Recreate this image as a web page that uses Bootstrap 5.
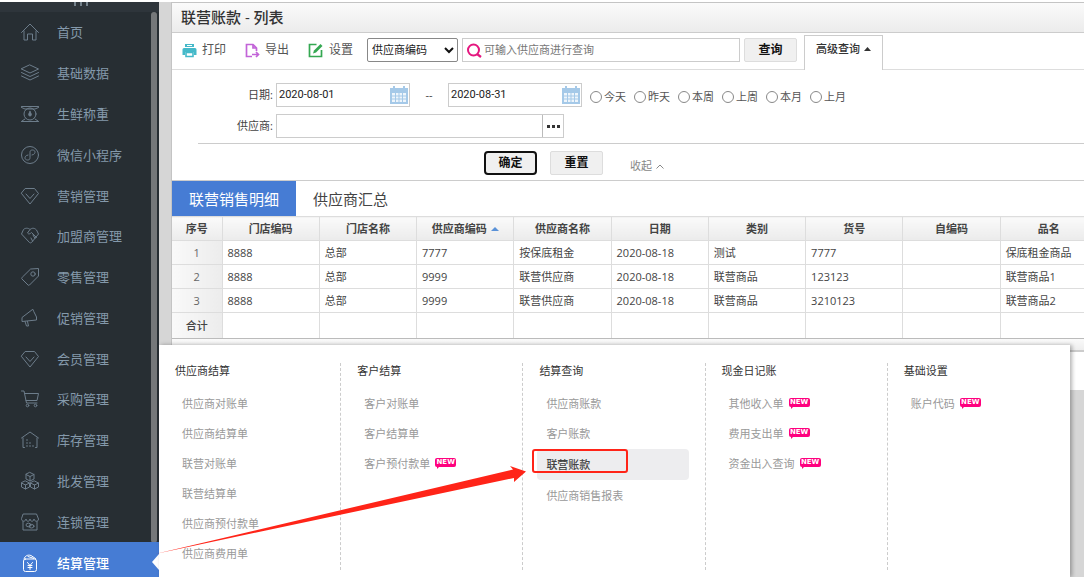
<!DOCTYPE html>
<html lang="zh-CN">
<head>
<meta charset="utf-8">
<meta name="viewport" content="width=device-width, initial-scale=1">
<title>联营账款 - 列表</title>
<link href="https://cdn.jsdelivr.net/npm/bootstrap@5.3.0/dist/css/bootstrap.min.css" rel="stylesheet">
<style>
  body{font-family:"Open Sans","Noto Sans CJK SC",sans-serif;font-size:11px;line-height:16px;color:#444;height:100vh;overflow:hidden;padding-top:2px;background:#fff}
  svg{display:block;flex:none}
  .line-ico{fill:none;stroke:currentColor;stroke-width:1;stroke-linejoin:round;stroke-linecap:round}
  a{text-decoration:none}
  /* sidebar */
  .side{width:159px;background:#272e33;overflow:hidden}
  .side-top{height:10px;background:#2e353b;overflow:hidden;padding-left:74px;gap:4px}
  .side-top i{width:2px;height:4px;background:#75828c}
  .side-list{height:calc(100vh - 6px)}
  .side-list::after{content:"";position:absolute;right:2px;top:0;width:6px;height:93%;border-radius:3px;background:#75787a}
  .side-item{flex:1 1 0;padding-left:20px;gap:17px;font-size:13px;color:#8499ab}
  .side-item svg{width:20px;height:20px;color:#6d7d8b}
  .side-item.active{background:#467cd4;color:#fff;font-weight:500;z-index:1}
  .side-item.active svg{color:#fff}
  .side-item.active::after{content:"";position:absolute;right:0;top:12px;border:8px solid transparent;border-left:0;border-right:7px solid #fff}
  /* main panel */
  .desk{background:#d6d6d6;padding-left:12px;min-width:0}
  .panel{background:#fff;border:1px solid #c4c4c4;border-right:0;border-bottom:0}
  .panel-title{height:30px;padding-left:9px;font-size:15px;line-height:28px;font-weight:500;color:#333;background:linear-gradient(#fafafa,#ececec);border-bottom:1px solid #ccc;margin:0}
  .tools{height:37px;padding:0 0 2px 10px;border-bottom:1px solid #ddd}
  .tool-btn{border:0;background:none;padding:0;font-size:12px;color:#555;gap:5px;margin-right:19px}
  .tool-btn.last{margin-right:14px}
  .box{border:1px solid #ccc;background:#fff;height:24px;color:#222}
  .box input,.query-sel{font-size:11px;color:#222;outline:0}
  .box input{border:0;min-width:0;padding:0 0 0 2px;background:none}
  .box input.day{font-family:Roboto,sans-serif}
  .box input::placeholder{color:#777}
  .query-sel{width:91px;height:24px;border:1px solid #888;border-radius:2px;background:#fff;padding:0 4px;appearance:none}
  .sel-wrap svg{position:absolute;right:4px;top:9px;pointer-events:none}
  .w-search{width:278px}
  .w-date{width:134px}
  .w-dash{width:38px}
  .w-sup{width:288px}
  .btn-gray{height:24px;width:53px;padding:0;border:1px solid #ddd;border-radius:2px;background:#f0f0f0;color:#111;font-size:12px;font-weight:700;line-height:20px}
  .btn-ok{border:2px solid #111;border-radius:4px}
  .adv{align-self:flex-end;width:79px;height:35px;margin:0 0 -3px 7px;padding:0 0 8px;border:1px solid #ccc;border-bottom:0;background:#fff;font-size:11px;font-weight:500;color:#333}
  .filter{padding:13px 0 5px}
  .flabel{width:101px;text-align:right;margin-right:3px}
  .sup-row{margin-top:7px}
  .radio-lbl{gap:2px;margin-right:8px;color:#555}
  .radio-lbl input{appearance:none;width:12px;height:12px;border:1px solid #888;border-radius:50%;margin:0}
  .rule{margin:5px 0 7px 26px;border-top:1px solid #ccc}
  .btn-row{padding-left:312px;gap:13px}
  .more{border:0;border-left:1px solid #bbb;background:#fff;width:21px;height:22px;padding:0}
  .fold{border:0;background:none;padding:0;color:#888;margin:6px 0 0 14px}
  .tabs{border-top:1px solid #ccc;height:36px}
  .tab-btn{border:0;background:#fff;font-size:15px;color:#444;padding:0 17px;height:35px}
  .tab-btn.on{background:#467cd4;color:#fff}
  /* grid */
  .grid{table-layout:fixed;width:calc(100% + 14px);border-collapse:collapse}
  .grid th,.grid td{border:1px solid #ddd;border-left:0;height:24px;padding:0 5px;white-space:nowrap;overflow:hidden}
  .grid thead th{text-align:center;font-weight:700;color:#444;background:linear-gradient(#fafafa,#ebebeb)}
  .grid tbody th,.grid tfoot th{text-align:center;font-weight:400;color:#666;background:linear-gradient(90deg,#f9f9f9,#ececec);padding:0}
  .grid tfoot th{font-weight:500;color:#444}
  .grid tfoot th,.grid tfoot td{height:26px;border-bottom-color:#bbb}
  .foot-bar{height:13px;background:linear-gradient(#fafafa,#eee);border-bottom:2px solid #ccc}
  .foot-gap{height:38px}
  /* fly-out menu */
  .fly{position:absolute;z-index:2;left:0;right:14px;top:343px;bottom:0;background:#fff;box-shadow:2px 0 4px rgba(0,0,0,.3);clip-path:inset(-6px -6px 0 -8px);padding-top:18px}
  .fly-col{height:207px;border-right:1px dashed #ccc}
  .fly-col:last-child{border:0}
  .fly-h{font-size:11px;line-height:16px;margin:0 0 10px 16px;font-weight:400;color:#333}
  .fly-a{display:flex;align-items:center;height:30px;margin:0 16px 0 14px;padding-left:9px;color:#999;position:relative;white-space:nowrap}
  .fly-a.cur{background:#ededef;border-radius:4px;color:#444;height:31px;margin-bottom:1px;font-weight:500}
  .ring{position:absolute;left:-5px;top:0;width:96px;height:24px;border:2px solid #ff2418;border-radius:3px}
  .new{position:relative;background:#ff007e;color:#fff;font:bold 7px/9px "DejaVu Sans",sans-serif;width:21px;height:9px;text-align:center;border-radius:2px;margin:0 0 3px 5px}
  .new::after{content:"";position:absolute;left:2px;top:8px;border-top:3px solid #ff007e;border-right:3px solid transparent}
  .pointer{position:absolute;left:-5px;top:118px;pointer-events:none;z-index:5}
</style>
</head>
<body>
<div class="d-flex h-100">
  <nav class="side flex-shrink-0" aria-label="主菜单">
    <div class="side-top d-flex"><i></i><i></i><i></i></div>
    <div class="side-list d-flex flex-column position-relative">
      <a href="#" class="side-item d-flex align-items-center"><svg class="line-ico" viewBox="0 0 20 20"><path d="M1.500 10.500 10 2l8.500 8.500M4 9v9h3.500v-6h5v6H16V9"/></svg>首页</a>
      <a href="#" class="side-item d-flex align-items-center"><svg class="line-ico" viewBox="0 0 20 20"><path d="M10 2l8.500 4L10 10 1.500 6zM1.500 9.500l8.500 4 8.500-4M1.500 13l8.500 4 8.500-4"/></svg>基础数据</a>
      <a href="#" class="side-item d-flex align-items-center"><svg class="line-ico" viewBox="0 0 20 20"><path d="M1.500 2.500h17M1.500 3.500L5 5h10l3.500-1.500M1.500 17.500h17M5 15l-3 2M15 15l3 2"/><circle cx="10" cy="10" r="6"/><path d="M10 7.500c-2 3-1.500 4.500 0 4.500s2-1.500 0-4.500z" fill="currentColor"/></svg>生鲜称重</a>
      <a href="#" class="side-item d-flex align-items-center"><svg class="line-ico" viewBox="0 0 20 20"><circle cx="10" cy="10" r="8.500"/><path d="M8 10c-4 .5-4 5-.5 5C9.500 15 10 14 10 12.500V7.500C10 6 10.500 5 12.500 5c3.500 0 3.500 4.500-.5 5"/></svg>微信小程序</a>
      <a href="#" class="side-item d-flex align-items-center"><svg class="line-ico" viewBox="0 0 20 20"><path d="M5.500 2.500h9l4 5L10 18 1.500 7.500zM6 8l4 4.500L14 8"/></svg>营销管理</a>
      <a href="#" class="side-item d-flex align-items-center"><svg class="line-ico" viewBox="0 0 20 20"><path d="M10 3.500C8 1.500 5 2 3.500 3.500L1.500 8l8 8.500c.5.500 1.500.5 2 0l7-8.500-2-4C14 1.500 12 2 10 3.500L7.500 7c1 1.500 2.500 1 4-.5l5 5M13 9l2 3.500M11 12l1.500 3"/></svg>加盟商管理</a>
      <a href="#" class="side-item d-flex align-items-center"><svg class="line-ico" viewBox="0 0 20 20"><path d="M11 2l7.500-.5V9L9.500 18c-.5.500-1 .5-1.500 0l-6-6c-.5-.5-.5-1 0-1.500z"/><circle cx="13" cy="7" r="2.200"/></svg>零售管理</a>
      <a href="#" class="side-item d-flex align-items-center"><svg class="line-ico" viewBox="0 0 20 20"><path d="M12.500 1.500L2 9.500v4l14.500-1.500v-3L14 4zM5 13.500l1.500 4.500h2l-1-4.500"/></svg>促销管理</a>
      <a href="#" class="side-item d-flex align-items-center"><svg class="line-ico" viewBox="0 0 20 20"><path d="M5.500 2.500h9l4 5L10 18 1.500 7.500zM6 8l4 4.500L14 8"/></svg>会员管理</a>
      <a href="#" class="side-item d-flex align-items-center"><svg class="line-ico" viewBox="0 0 20 20"><path d="M1.500 2H4l2.500 12H17M5 4.500h13.500L17 11.500H6"/><circle cx="7.500" cy="16.500" r="1.300"/><circle cx="15.500" cy="16.500" r="1.300"/></svg>采购管理</a>
      <a href="#" class="side-item d-flex align-items-center"><svg class="line-ico" viewBox="0 0 20 20"><path d="M1.500 8L10 2l8.500 6M3 8v9.500h1.500M17 8v9.500h-1.500"/><path d="M7 9.500v8M10 12.500v5M13 15.500v2" stroke-dasharray="1 2"/></svg>库存管理</a>
      <a href="#" class="side-item d-flex align-items-center"><svg class="line-ico" viewBox="0 0 20 20"><path d="M10 1.500l4 2v4.500l-4 2-4-2V3.500zM6 3.500l4 2 4-2M10 5.500V10M5.500 10l4 2v4l-4 2-4-2v-4zM1.500 12l4 2 4-2M5.500 14v4M14.500 10l4 2v4l-4 2-4-2v-4zM10.500 12l4 2 4-2M14.500 14v4"/></svg>批发管理</a>
      <a href="#" class="side-item d-flex align-items-center"><svg class="line-ico" viewBox="0 0 20 20"><path d="M3.500 2h13l2 5c0 3-4 3-4.500 0-.5 3-3.500 3-4 0-.5 3-3.500 3-4 0-.5 3-4.500 3-4.500 0zM3 9.500V18h14V9.500"/><ellipse cx="8.500" cy="13" rx="2.500" ry="1.800"/><ellipse cx="11.500" cy="14.200" rx="2.500" ry="1.800"/></svg>连锁管理</a>
      <a href="#" class="side-item active position-relative d-flex align-items-center"><svg class="line-ico" viewBox="0 0 20 20" stroke-width="1.500"><rect x="3.500" y="6" width="13" height="12.500" rx="2"/><path d="M4 6c1-3.500 4-4.500 7-3.500l4.500 3M8 3.500l6 2M7.500 9.500L10 12.500l2.500-3M8 12.500h4M8 14.500h4M10 12.500v4"/></svg>结算管理</a>
    </div>
  </nav>

  <main class="desk flex-grow-1 position-relative">
    <section class="panel">
      <h1 class="panel-title">联营账款 - 列表</h1>
      <div class="tools d-flex align-items-center">
        <button type="button" class="tool-btn d-flex align-items-center"><svg width="15" height="15" viewBox="0 0 15 15"><path d="M3 1h9v3H3zM2 5h11a1.500 1.500 0 011.500 1.500V12H12V9H3v3H.500V6.500A1.500 1.500 0 012 5z" fill="#45b9c9"/><path d="M4 9.500h7v4H4z" fill="none" stroke="#45b9c9" stroke-width="1.600"/><path d="M5 2.500h5" stroke="#fff"/></svg>打印</button>
        <button type="button" class="tool-btn d-flex align-items-center"><svg width="15" height="15" viewBox="0 0 15 15"><path d="M7 13.500H1.500v-12H8L11.500 5v3M8 1.500V5h3.500M7 11.500h6M11 9l2.500 2.500L11 14" fill="none" stroke="#c264d8" stroke-width="1.700"/></svg>导出</button>
        <button type="button" class="tool-btn last d-flex align-items-center"><svg width="16" height="15" viewBox="0 0 16 15"><path d="M8.500 1.500h-7v12h12V7" fill="none" stroke="#35a852" stroke-width="1.700"/><path d="M5 10.500l1-3L12.500 1l2 2L8 9.500z" fill="#35a852"/></svg>设置</button>
        <div class="sel-wrap position-relative me-1">
          <select class="query-sel" aria-label="查询字段"><option>供应商编码</option></select>
          <svg width="10" height="7" viewBox="0 0 10 7"><path d="M1 1l4 4 4-4" fill="none" stroke="#111" stroke-width="2"/></svg>
        </div>
        <div class="box w-search d-flex align-items-center ps-1 me-1">
          <svg width="15" height="15" viewBox="0 0 15 15"><circle cx="6.500" cy="7" r="5.500" fill="none" stroke="#e5177f" stroke-width="2"/><path d="M10 11l4 3" stroke="#e5177f" stroke-width="2.200"/></svg>
          <input class="flex-grow-1" type="text" placeholder="可输入供应商进行查询" aria-label="供应商">
        </div>
        <button type="button" class="btn-gray">查询</button>
        <button type="button" class="adv d-flex align-items-center justify-content-center">高级查询<svg class="ms-1" width="7" height="4" viewBox="0 0 7 4"><path d="M0 4l3.500-4L7 4z" fill="#333"/></svg></button>
      </div>

      <form class="filter" onsubmit="return false">
        <div class="d-flex align-items-center">
          <label class="flabel" for="d1">日期:</label>
          <div class="box w-date d-flex align-items-center">
            <input id="d1" class="day flex-grow-1" type="text" value="2020-08-01">
            <svg width="20" height="19" viewBox="0 0 20 19"><path d="M1 2h18v16H1zM4 0h2v3H4zM14 0h2v3h-2z" fill="#a5c9e8"/><path d="M3 7h14v9H3z" fill="#eef5fb"/><path d="M3 10h14M3 13h14M6.500 7v9M10 7v9M13.500 7v9" stroke="#a5c9e8"/></svg>
          </div>
          <span class="w-dash text-center">--</span>
          <div class="box w-date d-flex align-items-center me-2">
            <input class="day flex-grow-1" type="text" value="2020-08-31" aria-label="结束日期">
            <svg width="20" height="19" viewBox="0 0 20 19"><path d="M1 2h18v16H1zM4 0h2v3H4zM14 0h2v3h-2z" fill="#a5c9e8"/><path d="M3 7h14v9H3z" fill="#eef5fb"/><path d="M3 10h14M3 13h14M6.500 7v9M10 7v9M13.500 7v9" stroke="#a5c9e8"/></svg>
          </div>
          <div class="d-flex pt-1">
            <label class="radio-lbl d-flex align-items-center"><input type="radio" name="r">今天</label>
            <label class="radio-lbl d-flex align-items-center"><input type="radio" name="r">昨天</label>
            <label class="radio-lbl d-flex align-items-center"><input type="radio" name="r">本周</label>
            <label class="radio-lbl d-flex align-items-center"><input type="radio" name="r">上周</label>
            <label class="radio-lbl d-flex align-items-center"><input type="radio" name="r">本月</label>
            <label class="radio-lbl d-flex align-items-center"><input type="radio" name="r">上月</label>
          </div>
        </div>
        <div class="sup-row d-flex align-items-center">
          <label class="flabel" for="sup">供应商:</label>
          <div class="box w-sup d-flex">
            <input id="sup" class="flex-grow-1" type="text">
            <button type="button" class="more" aria-label="选择供应商"><svg class="mx-auto" width="13" height="3" viewBox="0 0 13 3"><path d="M0 0h3v3H0zM5 0h3v3H5zM10 0h3v3h-3z" fill="#333"/></svg></button>
          </div>
        </div>
        <div class="rule"></div>
        <div class="btn-row d-flex align-items-center">
          <button type="submit" class="btn-gray btn-ok">确定</button>
          <button type="reset" class="btn-gray">重置</button>
          <button type="button" class="fold d-flex align-items-center">收起<svg class="ms-1" width="8" height="5" viewBox="0 0 8 5"><path d="M.500 4.500L4 1l3.500 3.500" fill="none" stroke="#888"/></svg></button>
        </div>
      </form>

      <div class="tabs d-flex">
        <button type="button" class="tab-btn on">联营销售明细</button>
        <button type="button" class="tab-btn">供应商汇总</button>
      </div>
      <div class="overflow-hidden">
      <table class="grid">
        <colgroup><col style="width:50px"><col><col><col><col><col><col><col><col><col></colgroup>
        <thead><tr><th>序号</th><th>门店编码</th><th>门店名称</th><th><span class="d-inline-flex align-items-center">供应商编码<svg class="ms-1" width="8" height="4" viewBox="0 0 8 4"><path d="M0 4l4-4 4 4z" fill="#5a92d8"/></svg></span></th><th>供应商名称</th><th>日期</th><th>类别</th><th>货号</th><th>自编码</th><th>品名</th></tr></thead>
        <tbody>
          <tr><th>1</th><td>8888</td><td>总部</td><td>7777</td><td>按保底租金</td><td>2020-08-18</td><td>测试</td><td>7777</td><td></td><td>保底租金商品</td></tr>
          <tr><th>2</th><td>8888</td><td>总部</td><td>9999</td><td>联营供应商</td><td>2020-08-18</td><td>联营商品</td><td>123123</td><td></td><td>联营商品1</td></tr>
          <tr><th>3</th><td>8888</td><td>总部</td><td>9999</td><td>联营供应商</td><td>2020-08-18</td><td>联营商品</td><td>3210123</td><td></td><td>联营商品2</td></tr>
        </tbody>
        <tfoot><tr><th>合计</th><td></td><td></td><td></td><td></td><td></td><td></td><td></td><td></td><td></td></tr></tfoot>
      </table>
      </div>
      <div class="foot-bar"></div>
      <div class="foot-gap"></div>
    </section>

    <div class="fly">
      <div class="row row-cols-5 g-0">
        <div class="fly-col">
          <h2 class="fly-h">供应商结算</h2>
          <a class="fly-a" href="#">供应商对账单</a><a class="fly-a" href="#">供应商结算单</a><a class="fly-a" href="#">联营对账单</a><a class="fly-a" href="#">联营结算单</a><a class="fly-a" href="#">供应商预付款单</a><a class="fly-a" href="#">供应商费用单</a>
        </div>
        <div class="fly-col">
          <h2 class="fly-h">客户结算</h2>
          <a class="fly-a" href="#">客户对账单</a><a class="fly-a" href="#">客户结算单</a><a class="fly-a" href="#">客户预付款单<span class="new">NEW</span></a>
        </div>
        <div class="fly-col">
          <h2 class="fly-h">结算查询</h2>
          <a class="fly-a" href="#">供应商账款</a><a class="fly-a" href="#">客户账款</a><a class="fly-a cur" href="#">联营账款<span class="ring"></span></a><a class="fly-a" href="#">供应商销售报表</a>
        </div>
        <div class="fly-col">
          <h2 class="fly-h">现金日记账</h2>
          <a class="fly-a" href="#">其他收入单<span class="new">NEW</span></a><a class="fly-a" href="#">费用支出单<span class="new">NEW</span></a><a class="fly-a" href="#">资金出入查询<span class="new">NEW</span></a>
        </div>
        <div class="fly-col">
          <h2 class="fly-h">基础设置</h2>
          <a class="fly-a" href="#">账户代码<span class="new">NEW</span></a>
        </div>
      </div>
      <svg class="pointer" width="376" height="96" viewBox="0 0 376 96"><path d="M1 91L359 6.500 356 3l16 5.500-12 10.500V15z" fill="#ff2418"/></svg>
    </div>
  </main>
</div>
<script src="https://cdn.jsdelivr.net/npm/bootstrap@5.3.0/dist/js/bootstrap.bundle.min.js"></script>
</body>
</html>
